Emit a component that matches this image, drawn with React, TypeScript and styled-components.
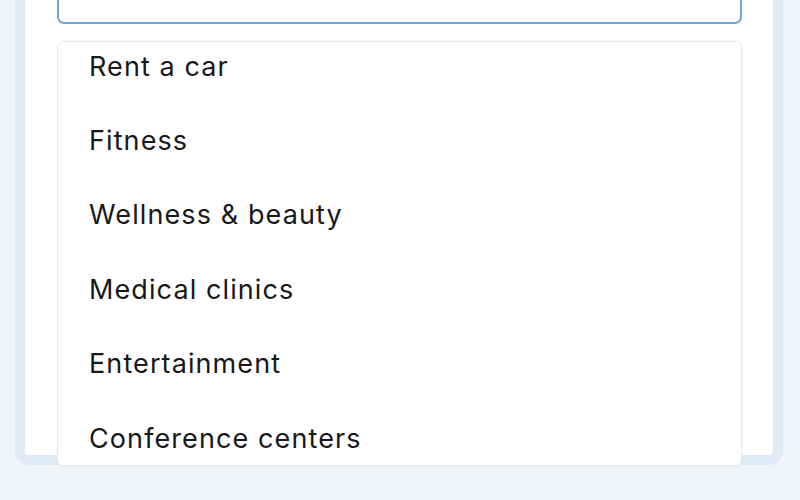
import React from 'react'
import styled, { createGlobalStyle } from 'styled-components'

const GlobalStyle = createGlobalStyle`
  html, body {
    margin: 0;
    padding: 0;
    background: #f0f4f9;
    font-family: Inter, "Noto Sans", "Liberation Sans", sans-serif;
  }
`

const categories = [
  'Rent a car',
  'Fitness',
  'Wellness & beauty',
  'Medical clinics',
  'Entertainment',
  'Conference centers',
]

export default function App() {
  return (
    <>
      <GlobalStyle />
      <Page>
        <Panel>
          <Field>
            <SearchInput aria-label="Category" />
            <Dropdown>
              <OptionList>
                {categories.map(name => (
                  <Option key={name}>{name}</Option>
                ))}
              </OptionList>
            </Dropdown>
          </Field>
        </Panel>
      </Page>
    </>
  )
}

const Page = styled.div`
  display: flow-root;
  width: 800px;
  height: 500px;
  overflow: hidden;
  padding: 0 17px 0 15px;
  box-sizing: border-box;
`

const Panel = styled.div`
  margin-top: -60px;
  height: 525px;
  box-sizing: border-box;
  background: #ffffff;
  border: 10px solid #deebf7;
  border-radius: 14px;
  padding: 20px 31px 0 32px;
`

const Field = styled.div`
  position: relative;
`

const SearchInput = styled.input`
  display: block;
  width: 100%;
  height: 54px;
  box-sizing: border-box;
  border: 2px solid #6fa3e2;
  border-radius: 7px;
  background: #ffffff;
  outline: none;
`

const Dropdown = styled.div`
  position: absolute;
  top: calc(100% + 17px);
  left: 0;
  right: 0;
  height: 425px;
  box-sizing: border-box;
  background: #ffffff;
  border: 1px solid #e9eaec;
  border-radius: 6px;
  overflow: hidden;
  box-shadow: 0 1px 3px rgba(20, 30, 50, 0.04);
`

const OptionList = styled.ul`
  list-style: none;
  margin: -13px 0 0;
  padding: 0;
`

const Option = styled.li`
  height: 74.4px;
  display: flex;
  align-items: center;
  padding-left: 31px;
  font-size: 27px;
  color: #18181a;
  letter-spacing: 1.1px;
`
